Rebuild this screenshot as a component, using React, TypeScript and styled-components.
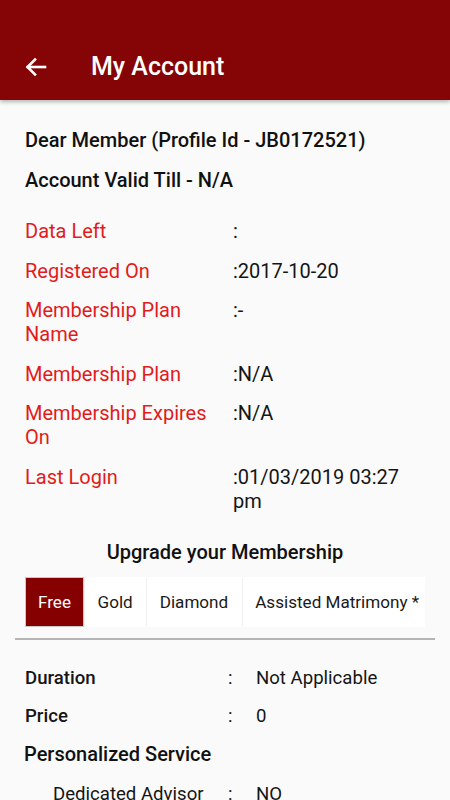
import React from 'react';
import styled, { createGlobalStyle } from 'styled-components';

const GlobalStyle = createGlobalStyle`
  html, body {
    margin: 0;
    padding: 0;
    background: #fafafa;
    font-family: Roboto, 'Liberation Sans', sans-serif;
  }
`;

const Page = styled.div`
  width: 450px;
  height: 800px;
  overflow: hidden;
  background: #fafafa;
`;

const AppBar = styled.header`
  height: 100px;
  background: #850507;
  display: flex;
  align-items: flex-end;
  padding: 0 0 11px 24px;
  box-sizing: border-box;
  box-shadow: 0 2px 4px rgba(0, 0, 0, 0.28);
  position: relative;
`;

const BackButton = styled.button`
  width: 24px;
  height: 44px;
  padding: 0;
  border: none;
  background: none;
  color: #fff;
  display: flex;
  align-items: center;
  justify-content: center;
`;

const Title = styled.h1`
  margin: 0 0 0 43px;
  color: #fff;
  font-size: 25px;
  font-weight: 500;
  line-height: 44px;
`;

const Content = styled.main`
  padding: 20px 25px 0;
`;

const Heading = styled.h2`
  margin: 0;
  font-size: 20px;
  font-weight: 500;
  color: #111;
  line-height: 40px;
`;

const InfoList = styled.div`
  margin-top: 19px;
  display: flex;
  flex-direction: column;
  gap: 15.5px;
`;

const InfoRow = styled.div`
  display: grid;
  grid-template-columns: 208px 1fr;
  font-size: 20px;
  line-height: 24px;
`;

const InfoLabel = styled.span`
  color: #e21b1b;
`;

const InfoValue = styled.span`
  color: #151515;
`;

const SectionTitle = styled.h3`
  margin: 27px 0 0;
  text-align: center;
  font-size: 20px;
  font-weight: 500;
  color: #111;
  line-height: 24px;
`;

const Tabs = styled.div`
  display: flex;
  margin-top: 13px;
  height: 50px;
  width: 400px;
  overflow: hidden;
`;

const Tab = styled.div<{ $active?: boolean }>`
  display: flex;
  align-items: center;
  flex-shrink: 0;
  padding: 0 ${p => (p.$active ? 12 : 12.5)}px;
  font-size: 17.1px;
  background: ${p => (p.$active ? '#850000' : '#fff')};
  color: ${p => (p.$active ? '#fff' : '#1a1a1a')};
  border: 1px solid ${p => (p.$active ? '#c9c9c9' : 'transparent')};
  border-left: 1px solid ${p => (p.$active ? '#c9c9c9' : '#f0f0f0')};
  white-space: nowrap;
`;

const Divider = styled.hr`
  margin: 11px -10px 0;
  border: none;
  border-top: 2px solid #b5b5b5;
`;

const PlanList = styled.div`
  margin-top: 26px;
  display: flex;
  flex-direction: column;
  gap: 14px;
`;

const PlanRow = styled.div<{ $indent?: boolean }>`
  display: grid;
  grid-template-columns: ${p => (p.$indent ? '175px' : '203px')} 28px 1fr;
  padding-left: ${p => (p.$indent ? 28 : 0)}px;
  font-size: 18.6px;
  line-height: 24px;
  color: #151515;
`;

const PlanLabel = styled.span<{ $bold?: boolean }>`
  font-weight: ${p => (p.$bold ? 500 : 400)};
`;

const PlanGroup = styled.div`
  font-size: 20px;
  font-weight: 500;
  line-height: 24px;
  color: #111;
  margin: 0 0 2px -1px;
`;

const info = [
  ['Data Left', ':'],
  ['Registered On', ':2017-10-20'],
  ['Membership Plan Name', ':-'],
  ['Membership Plan', ':N/A'],
  ['Membership Expires On', ':N/A'],
  ['Last Login', ':01/03/2019 03:27 pm'],
];

const tabs = ['Free', 'Gold', 'Diamond', 'Assisted Matrimony *'];

export default function App() {
  return (
    <Page>
      <GlobalStyle />
      <AppBar>
        <BackButton aria-label="Back">
          <svg width="22" height="20" viewBox="0 0 22 20" fill="none" stroke="#fff" strokeWidth="2.6" strokeLinecap="square">
            <path d="M20 10H3" />
            <path d="M10 2.5L2.5 10L10 17.5" />
          </svg>
        </BackButton>
        <Title>My Account</Title>
      </AppBar>
      <Content>
        <Heading>Dear Member (Profile Id - JB0172521)</Heading>
        <Heading>Account Valid Till - N/A</Heading>
        <InfoList>
          {info.map(([label, value]) => (
            <InfoRow key={label}>
              <InfoLabel>{label}</InfoLabel>
              <InfoValue>{value}</InfoValue>
            </InfoRow>
          ))}
        </InfoList>
        <SectionTitle>Upgrade your Membership</SectionTitle>
        <Tabs>
          {tabs.map((t, i) => (
            <Tab key={t} $active={i === 0}>{t}</Tab>
          ))}
        </Tabs>
        <Divider />
        <PlanList>
          <PlanRow>
            <PlanLabel $bold>Duration</PlanLabel>
            <span>:</span>
            <span>Not Applicable</span>
          </PlanRow>
          <PlanRow>
            <PlanLabel $bold>Price</PlanLabel>
            <span>:</span>
            <span>0</span>
          </PlanRow>
          <PlanGroup>Personalized Service</PlanGroup>
          <PlanRow $indent>
            <PlanLabel>Dedicated Advisor</PlanLabel>
            <span>:</span>
            <span>NO</span>
          </PlanRow>
        </PlanList>
      </Content>
    </Page>
  );
}
